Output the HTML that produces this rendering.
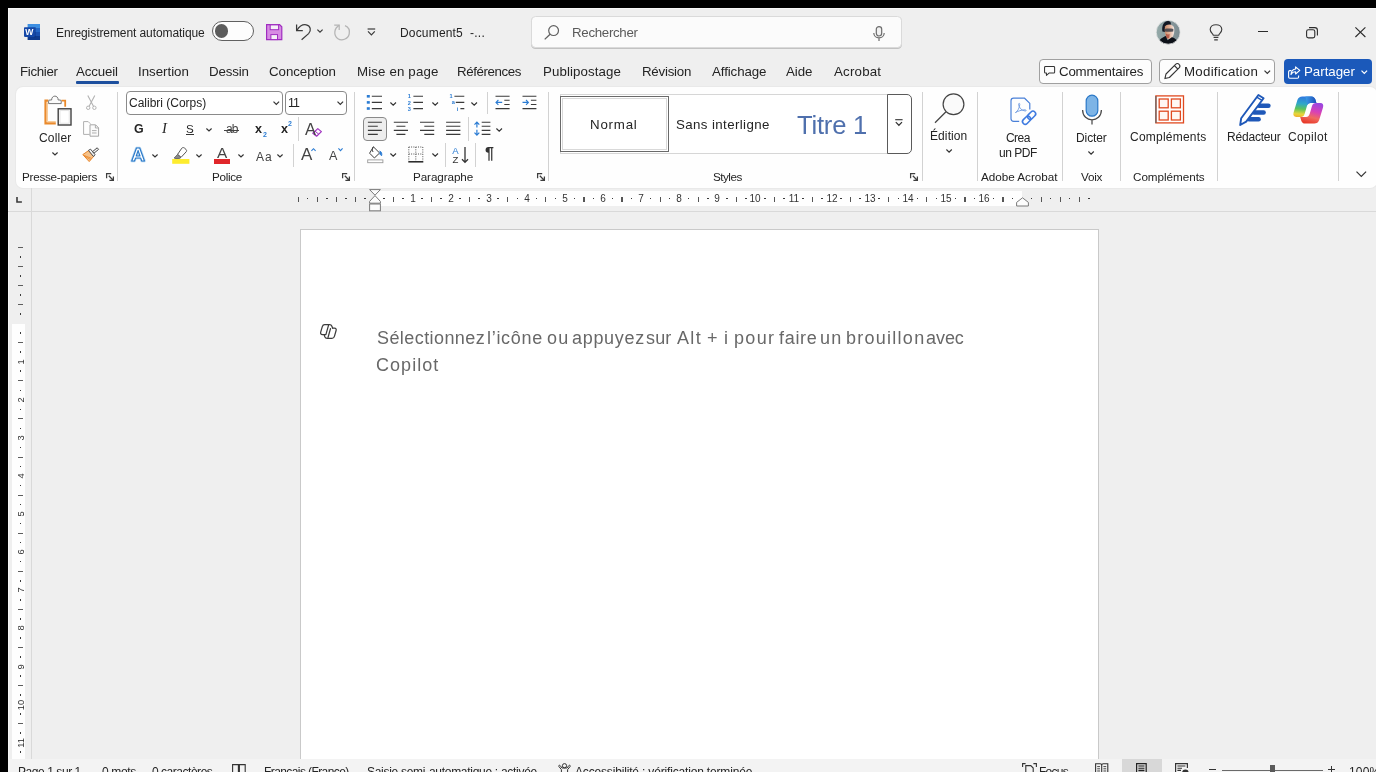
<!DOCTYPE html>
<html lang="fr">
<head>
<meta charset="utf-8">
<title>Document5 - Word</title>
<style>
html,body{margin:0;padding:0;}
body{width:1376px;height:772px;overflow:hidden;background:#000;position:relative;font-family:"Liberation Sans",sans-serif;}
#win{position:absolute;left:8px;top:8px;width:1368px;height:764px;background:#efefef;}
.a{position:absolute;}
.t{position:absolute;white-space:nowrap;line-height:20px;height:20px;will-change:transform;}
svg{position:absolute;overflow:visible;}
svg.g{will-change:transform;}
.sep{position:absolute;width:1px;background:#d2d2d2;}
.box{position:absolute;box-sizing:border-box;border:1.25px solid #8a8a8a;border-radius:4px;background:#fff;}
</style>
</head>
<body>
<div id="win"></div>
<div class="a" style="left:8px;top:8px;width:1368px;height:1px;background:#f8f8f8"></div>
<div class="a" style="left:8px;top:8px;width:1px;height:764px;background:#f8f8f8"></div>
<!-- ===== title bar ===== -->
<svg class="g" style="left:24px;top:24px" width="16" height="16" viewBox="0 0 16 16">
 <rect x="3.6" y="0" width="12.4" height="4" fill="#3d8fe2"/>
 <rect x="3.6" y="4" width="12.4" height="4" fill="#2467c6"/>
 <rect x="3.6" y="8" width="12.4" height="4" fill="#184fae"/>
 <rect x="3.6" y="12" width="12.4" height="4" fill="#0d3a8e"/>
 <rect x="9.8" y="3" width="2" height="10.6" fill="#0b2f78" opacity="0.45"/>
 <rect x="0" y="3.3" width="10.8" height="9.6" rx="0.8" fill="#1548a8"/>
 <text x="5.4" y="11.2" font-family="Liberation Sans, sans-serif" font-weight="bold" font-size="8.6" fill="#fff" text-anchor="middle">W</text>
</svg>
<div class="a" style="left:211.5px;top:21px;width:42.5px;height:20px;box-sizing:border-box;border:1.2px solid #606060;border-radius:10px;background:#fdfdfd"></div>
<div class="a" style="left:215px;top:24.3px;width:13.4px;height:13.4px;border-radius:50%;background:#5c5c5c"></div>
<!-- save -->
<svg style="left:266px;top:24px" width="16.4" height="16.2" viewBox="0 0 16.4 16.2">
 <path d="M0.6 0.6 H13.6 L15.8 2.8 V15.6 H0.6 Z" fill="#d78ce3" stroke="#a02dc0" stroke-width="1.2" stroke-linejoin="miter"/>
 <rect x="4.2" y="0.9" width="8.4" height="4.8" fill="#f6f0f8" stroke="#a02dc0" stroke-width="1"/>
 <rect x="4.9" y="10.6" width="6.6" height="5" fill="#f6f0f8" stroke="#a02dc0" stroke-width="1"/>
</svg>
<!-- undo -->
<svg style="left:295px;top:23px" width="18" height="18" viewBox="0 0 18 18">
 <path d="M1.6 1.4 V7.6 H7.8" fill="none" stroke="#3b3b3b" stroke-width="1.25"/>
 <path d="M1.9 7.3 C4.2 3.6 7.6 1.2 11.2 1.8 C15.6 2.6 16.6 7.6 13.6 10.6 L6.6 16.8" fill="none" stroke="#3b3b3b" stroke-width="1.25"/>
</svg>
<svg style="left:317px;top:29px" width="6" height="4" viewBox="0 0 6 4"><path d="M0.4 0.6 L3 3.2 L5.6 0.6" fill="none" stroke="#3b3b3b" stroke-width="1.2"/></svg>
<!-- redo -->
<svg style="left:333px;top:23px" width="18" height="18" viewBox="0 0 18 18">
 <path d="M1.2 2 H6.2 V7" fill="none" stroke="#b4b4b4" stroke-width="1.25"/>
 <path d="M6 2.4 C1 5.6 0.4 12 4.6 15.4 C8.8 18.4 15 16.2 16.2 11 C17 7.4 15.2 4 12 2.6" fill="none" stroke="#b4b4b4" stroke-width="1.25"/>
</svg>
<!-- customize QAT -->
<svg style="left:367px;top:28px" width="9" height="8" viewBox="0 0 9 8">
 <path d="M0.6 1 H8.2" stroke="#3b3b3b" stroke-width="1.2" fill="none"/>
 <path d="M1 3.4 L4.4 6.8 L7.8 3.4" stroke="#3b3b3b" stroke-width="1.2" fill="none"/>
</svg>
<!-- search box -->
<div class="a" style="left:531px;top:16.2px;width:370.6px;height:31.8px;box-sizing:border-box;border:1px solid #dadada;border-radius:4.5px;background:#fbfbfb;box-shadow:0 1px 0 #c2c2c2"></div>
<svg style="left:544px;top:25px" width="16" height="15" viewBox="0 0 16 15">
 <circle cx="9.6" cy="5.6" r="4.9" fill="none" stroke="#5f5f5f" stroke-width="1.2"/>
 <path d="M6.1 9.2 L0.7 14.4" stroke="#5f5f5f" stroke-width="1.3" fill="none"/>
</svg>
<svg style="left:873px;top:25.5px" width="12" height="16" viewBox="0 0 12 16">
 <rect x="3.3" y="0.6" width="5.4" height="9.4" rx="2.7" fill="#f1f1f1" stroke="#6c6c6c" stroke-width="1.2"/>
 <path d="M0.8 7 C0.8 13.4 11.2 13.4 11.2 7 M6 12 V15" fill="none" stroke="#6c6c6c" stroke-width="1.2"/>
</svg>
<!-- avatar -->
<svg style="left:1156.2px;top:19.6px" width="24.4" height="24.4" viewBox="0 0 24.4 24.4">
 <defs><clipPath id="av"><circle cx="12.2" cy="12.2" r="12"/></clipPath>
 <linearGradient id="avg" x1="0" y1="0" x2="1" y2="0"><stop offset="0" stop-color="#93a9a8"/><stop offset="0.5" stop-color="#8b9c9f"/><stop offset="1" stop-color="#7a8a90"/></linearGradient>
 <linearGradient id="avf" x1="0" y1="0" x2="1" y2="0"><stop offset="0" stop-color="#c88a68"/><stop offset="0.55" stop-color="#e6b8a0"/><stop offset="1" stop-color="#f1e9e6"/></linearGradient></defs>
 <g clip-path="url(#av)">
  <rect width="24.4" height="24.4" fill="url(#avg)"/>
  <path d="M6.4 11.4 C5.4 5 8.4 0.6 12.4 1 C14.6 1.2 15.4 3 14.6 5 L9.2 12 Z" fill="#121824"/>
  <path d="M9 6.6 C10 3.8 16.4 3.4 17.8 7 C19 10.4 18 15.6 15.6 18.4 C13.6 20.4 10.6 18.8 9.6 15.4 C8.8 12.6 8.4 9.2 9 6.6 Z" fill="url(#avf)"/>
  <path d="M8.8 9 C11 8.4 14.6 8.4 17.4 9 L17.2 11.4 C14.6 12 11 12 9 11.4 Z" fill="#3a3d48" opacity="0.85"/>
  <path d="M10 13.8 C11.4 14.8 12.8 14.8 13.6 13.8 L13.4 17.6 C12.4 18.8 11 18.6 10.2 17.4 Z" fill="#b04a3a" opacity="0.8"/>
  <path d="M1.6 25 C2.6 19 6.6 17.4 9.8 16 L11.6 20.2 L15.8 17.2 C19 17.8 21.6 20 22.4 25 Z" fill="#0c1018"/>
 </g>
 <circle cx="12.2" cy="12.2" r="12" fill="none" stroke="#e6e6e6" stroke-width="0.8"/>
</svg>
<!-- lightbulb -->
<svg style="left:1208.5px;top:24px" width="14" height="17" viewBox="0 0 14 17">
 <path d="M4.3 11.2 C4.1 9.6 1.2 8.6 1.2 5.6 C1.2 2.6 3.8 0.7 7 0.7 C10.2 0.7 12.8 2.6 12.8 5.6 C12.8 8.6 9.9 9.6 9.7 11.2 Z" fill="none" stroke="#3b3b3b" stroke-width="1.15"/>
 <path d="M4.6 13.4 H9.4 M5.2 15.8 H8.8" stroke="#3b3b3b" stroke-width="1.15" fill="none"/>
</svg>
<!-- window controls -->
<div class="a" style="left:1258.2px;top:31.2px;width:10.2px;height:1.1px;background:#2b2b2b"></div>
<svg style="left:1305.5px;top:26.5px" width="12" height="11.5" viewBox="0 0 12 11.5">
 <rect x="0.6" y="2.7" width="8.2" height="8.2" rx="1.8" fill="none" stroke="#2b2b2b" stroke-width="1.1"/>
 <path d="M3 0.6 H8.8 C10.3 0.6 11.4 1.7 11.4 3.2 V8.6" fill="none" stroke="#2b2b2b" stroke-width="1.1"/>
</svg>
<svg style="left:1354.5px;top:27.2px" width="10.8" height="10.4" viewBox="0 0 10.8 10.4">
 <path d="M0.4 0.4 L10.4 10 M10.4 0.4 L0.4 10" stroke="#2b2b2b" stroke-width="1.1" fill="none"/>
</svg>
<!-- ===== tab row ===== -->
<div class="a" style="left:75.5px;top:81.3px;width:43px;height:2.4px;background:#1d4f9e;border-radius:1px"></div>
<div class="box" style="left:1038.8px;top:59.2px;width:112.8px;height:24.8px;border:1.4px solid #a0a0a0;background:#fdfdfd"></div>
<svg style="left:1044px;top:66px" width="11.2" height="10.3" viewBox="0 0 12 11">
 <path d="M1.6 0.6 H10.4 C11 0.6 11.4 1 11.4 1.6 V6.6 C11.4 7.2 11 7.6 10.4 7.6 H5.4 L2.6 10 V7.6 H1.6 C1 7.6 0.6 7.2 0.6 6.6 V1.6 C0.6 1 1 0.6 1.6 0.6 Z" fill="none" stroke="#333" stroke-width="1.1" stroke-linejoin="round"/>
</svg>
<div class="box" style="left:1159.3px;top:59.2px;width:116px;height:24.8px;border:1.4px solid #a0a0a0;background:#fdfdfd"></div>
<svg style="left:1164.4px;top:63.2px" width="16.4" height="16.2" viewBox="0 0 16.4 16.2">
 <path d="M11.6 1.3 C12.6 0.3 14.2 0.3 15.1 1.3 C16.1 2.3 16.1 3.8 15.1 4.8 L5.4 14.5 L0.9 15.6 L2 11 Z" fill="none" stroke="#333" stroke-width="1.1" stroke-linejoin="round"/>
 <path d="M10.4 2.6 L13.8 6" stroke="#333" stroke-width="1.1" fill="none"/>
</svg>
<svg style="left:1264.4px;top:69.8px" width="6.6" height="4.4" viewBox="0 0 6.6 4.4"><path d="M0.5 0.6 L3.3 3.5 L6.1 0.6" fill="none" stroke="#333" stroke-width="1.2"/></svg>
<div class="a" style="left:1283.6px;top:59.3px;width:88.6px;height:24.6px;border-radius:4px;background:#1b59ba"></div>
<svg style="left:1288px;top:65.6px" width="12.4" height="12.8" viewBox="0 0 12.4 12.8">
 <path d="M3.4 4.6 H1.8 C1.1 4.6 0.6 5.1 0.6 5.8 V11 C0.6 11.7 1.1 12.2 1.8 12.2 H9.4 C10.1 12.2 10.6 11.7 10.6 11 V9.4" fill="none" stroke="#fff" stroke-width="1.1"/>
 <path d="M7.6 0.8 L11.8 4.4 L7.6 8 V5.8 C5.4 5.8 4 6.6 3 8.6 C3.2 5.2 4.8 3.2 7.6 3 Z" fill="none" stroke="#fff" stroke-width="1.1" stroke-linejoin="round"/>
</svg>
<svg style="left:1361.4px;top:69.8px" width="6.6" height="4.4" viewBox="0 0 6.6 4.4"><path d="M0.5 0.6 L3.3 3.5 L6.1 0.6" fill="none" stroke="#fff" stroke-width="1.2"/></svg>
<!-- ===== ribbon panel ===== -->
<div class="a" style="left:16px;top:87.3px;width:1361px;height:100.3px;background:#fefefe;border-radius:7px;box-shadow:0 0 0 1px #e9e9e9"></div>
<!-- ===== clipboard group ===== -->
<svg style="left:42px;top:94px" width="32" height="34" viewBox="0 0 32 34">
 <path d="M6.4 6.7 H3.5 V29.3 H13.8" fill="none" stroke="#ea8a2c" stroke-width="2.2"/>
 <path d="M5.4 8.4 V27.6 H13.8" fill="none" stroke="#f8c890" stroke-width="1"/>
 <path d="M19.4 6.7 H23.2 V12.8" fill="none" stroke="#ea8a2c" stroke-width="1.8"/>
 <path d="M6.6 9.6 V7.2 C6.6 6.4 7 6 7.8 6 H9.6 C9.6 0.8 16.2 0.8 16.2 6 H18 C18.8 6 19.2 6.4 19.2 7.2 V9.6 Z" fill="#fbfbfb" stroke="#777" stroke-width="1"/>
 <rect x="16.2" y="14.8" width="12.8" height="16.2" fill="#fff" stroke="#404040" stroke-width="1.4"/>
 <rect x="18" y="16.6" width="9.2" height="12.6" fill="none" stroke="#e2e2e2" stroke-width="0.9"/>
</svg>
<svg style="left:52.2px;top:152px" width="6" height="3.6" viewBox="0 0 6 3.6"><path d="M0.4 0.5 L3 3 L5.6 0.5" fill="none" stroke="#333" stroke-width="1.15"/></svg>
<!-- cut -->
<svg style="left:85.6px;top:95.4px" width="10.6" height="15.2" viewBox="0 0 10.6 15.2">
 <path d="M1.8 0.4 L7.6 11.4 M8.8 0.4 L3 11.4" stroke="#b2b2b2" stroke-width="1.1" fill="none"/>
 <circle cx="2.2" cy="12.8" r="1.7" fill="none" stroke="#b2b2b2" stroke-width="1"/>
 <circle cx="8.4" cy="12.8" r="1.7" fill="none" stroke="#b2b2b2" stroke-width="1"/>
</svg>
<!-- copy -->
<svg style="left:82.6px;top:120.8px" width="16.4" height="15.8" viewBox="0 0 16.4 15.8">
 <path d="M6.6 13.4 H0.6 V0.6 H5.2 L7.4 2.8" fill="none" stroke="#b0b0b0" stroke-width="1"/>
 <path d="M7 3.8 H12.6 L15.6 6.8 V15.2 H7 Z" fill="#fbfbfb" stroke="#a6a6a6" stroke-width="1"/>
 <path d="M12.4 4 V7 H15.4 M9 9.6 H13.6 M9 12 H13.6" fill="none" stroke="#a6a6a6" stroke-width="0.9"/>
</svg>
<!-- format painter -->
<svg style="left:82.4px;top:147px" width="17.4" height="15.4" viewBox="0 0 17.4 15.4">
 <path d="M0.8 7.6 L6.6 3.6 L11.6 9.4 L7.2 14.6 Z" fill="#f6c28a" stroke="#e8862a" stroke-width="1" stroke-linejoin="round"/>
 <path d="M3 9.4 L8.6 12.6 M2 8.4 L9.6 11.4" stroke="#e8862a" stroke-width="0.8" fill="none"/>
 <path d="M6.4 3.4 L8.6 2.2 L13 7.6 L11.6 9.6 Z" fill="#f4f4f4" stroke="#4a4a4a" stroke-width="1" stroke-linejoin="round"/>
 <path d="M10.6 4.6 L15.2 0.8 L16.6 2.4 L12 6.2 Z" fill="#f4f4f4" stroke="#4a4a4a" stroke-width="1" stroke-linejoin="round"/>
</svg>
<!-- launcher -->
<svg style="left:105.8px;top:173.2px" width="8" height="8" viewBox="0 0 8 8"><path d="M0.6 5.2 V0.6 H5.2 M2.8 2.8 L7.2 7.2 M7.4 3.4 V7.4 H3.4" fill="none" stroke="#3e3e3e" stroke-width="1.25"/></svg>
<div class="sep" style="left:117px;top:92px;height:89px"></div>
<!-- ===== font group ===== -->
<div class="box" style="left:126px;top:91px;width:156.8px;height:24px"></div>
<svg style="left:272.8px;top:101.4px" width="6.6" height="4.2" viewBox="0 0 6.6 4.2"><path d="M0.5 0.6 L3.3 3.4 L6.1 0.6" fill="none" stroke="#333" stroke-width="1.2"/></svg>
<div class="box" style="left:285.3px;top:91px;width:61.6px;height:24px"></div>
<svg style="left:336.6px;top:101.4px" width="6.6" height="4.2" viewBox="0 0 6.6 4.2"><path d="M0.5 0.6 L3.3 3.4 L6.1 0.6" fill="none" stroke="#333" stroke-width="1.2"/></svg>
<!-- underline for S, chevron -->
<div class="a" style="left:186.3px;top:134.3px;width:8px;height:1px;background:#333"></div>
<svg style="left:206px;top:128px" width="6" height="3.6" viewBox="0 0 6 3.6"><path d="M0.4 0.5 L3 3 L5.6 0.5" fill="none" stroke="#333" stroke-width="1.15"/></svg>
<!-- strike for ab -->
<div class="a" style="left:223.8px;top:129.7px;width:15.6px;height:1px;background:#444"></div>
<div class="sep" style="left:298.2px;top:117.4px;height:23.2px"></div>
<!-- eraser -->
<svg style="left:311.6px;top:127.8px" width="10" height="9" viewBox="0 0 10 9">
 <path d="M5.8 0.6 L9.4 3.6 L4.6 8.2 L0.8 5.2 Z" fill="#fdf6ff" stroke="#a136c0" stroke-width="1.2" stroke-linejoin="round"/>
 <path d="M3 3.2 L6.8 6.2" stroke="#a136c0" stroke-width="1" fill="none"/>
</svg>
<!-- text effects A -->
<svg class="g" style="left:129px;top:145px" width="19" height="19" viewBox="0 0 19 19">
 <text x="9.2" y="16.2" text-anchor="middle" font-family="Liberation Sans, sans-serif" font-weight="bold" font-size="19" fill="#d8e9f8" stroke="#b9d7f2" stroke-width="2.6" stroke-linejoin="round">A</text>
 <text x="9.2" y="16.2" text-anchor="middle" font-family="Liberation Sans, sans-serif" font-weight="bold" font-size="19" fill="#fff" stroke="#2878c8" stroke-width="1.1" stroke-linejoin="round">A</text>
</svg>
<svg style="left:151.8px;top:153.6px" width="6" height="3.6" viewBox="0 0 6 3.6"><path d="M0.4 0.5 L3 3 L5.6 0.5" fill="none" stroke="#333" stroke-width="1.15"/></svg>
<!-- highlighter -->
<svg style="left:172.4px;top:146.8px" width="17.6" height="17" viewBox="0 0 17.6 17">
 <path d="M9.8 1.2 C10.6 0.4 11.6 0.4 12.4 1 L14 2.4 C14.8 3.2 14.8 4 14.2 4.8 L9 10.4 L5.6 7.4 Z" fill="none" stroke="#555" stroke-width="1"/>
 <path d="M5.6 7.4 L9 10.4 L7.6 11.4 L3 11.6 L2.2 11 Z" fill="#8a8a8a" stroke="#555" stroke-width="0.8" stroke-linejoin="round"/>
 <rect x="0.2" y="12" width="17.2" height="4.8" fill="#fdec2e"/>
</svg>
<svg style="left:196px;top:153.6px" width="6" height="3.6" viewBox="0 0 6 3.6"><path d="M0.4 0.5 L3 3 L5.6 0.5" fill="none" stroke="#333" stroke-width="1.15"/></svg>
<!-- font color bar -->
<div class="a" style="left:213.8px;top:159.2px;width:16px;height:4.5px;background:#e0262a"></div>
<svg style="left:237.6px;top:153.6px" width="6" height="3.6" viewBox="0 0 6 3.6"><path d="M0.4 0.5 L3 3 L5.6 0.5" fill="none" stroke="#333" stroke-width="1.15"/></svg>
<svg style="left:276.8px;top:153.6px" width="6" height="3.6" viewBox="0 0 6 3.6"><path d="M0.4 0.5 L3 3 L5.6 0.5" fill="none" stroke="#333" stroke-width="1.15"/></svg>
<div class="sep" style="left:293.2px;top:143.8px;height:22.8px"></div>
<svg style="left:311.4px;top:148px" width="5" height="3.4" viewBox="0 0 5 3.4"><path d="M0.4 3 L2.5 0.7 L4.6 3" fill="none" stroke="#2b7cd3" stroke-width="1.1"/></svg>
<svg style="left:337.8px;top:148.2px" width="5" height="3.4" viewBox="0 0 5 3.4"><path d="M0.4 0.4 L2.5 2.7 L4.6 0.4" fill="none" stroke="#2b7cd3" stroke-width="1.1"/></svg>
<svg style="left:342.4px;top:173.2px" width="8" height="8" viewBox="0 0 8 8"><path d="M0.6 5.2 V0.6 H5.2 M2.8 2.8 L7.2 7.2 M7.4 3.4 V7.4 H3.4" fill="none" stroke="#3e3e3e" stroke-width="1.25"/></svg>
<div class="sep" style="left:354px;top:92px;height:89px"></div>
<!-- ===== paragraph group ===== -->
<svg style="left:366px;top:94px" width="18" height="17" viewBox="0 0 18 17">
 <g fill="#2b7cd3"><rect x="0.8" y="1" width="3" height="2.6"/><rect x="0.8" y="7.1" width="3" height="2.6"/><rect x="0.8" y="13.2" width="3" height="2.6"/></g>
 <path d="M5.8 2.2 H16 M5.8 8.4 H16 M5.8 14.6 H16" stroke="#3a3a3a" stroke-width="1.1" fill="none"/>
</svg>
<svg style="left:390.4px;top:101.6px" width="6.4" height="3.8" viewBox="0 0 6.4 3.8"><path d="M0.4 0.5 L3.2 3.2 L6 0.5" fill="none" stroke="#333" stroke-width="1.15"/></svg>
<svg class="g" style="left:407px;top:94px" width="18" height="17" viewBox="0 0 18 17">
 <g font-family="Liberation Sans, sans-serif" font-size="5.6" font-weight="bold" fill="#2b7cd3"><text x="0.8" y="4.3">1</text><text x="0.8" y="10.5">2</text><text x="0.8" y="16.7">3</text></g>
 <path d="M6.4 2.2 H16 M6.4 8.4 H16 M6.4 14.6 H16" stroke="#3a3a3a" stroke-width="1.1" fill="none"/>
</svg>
<svg style="left:431.6px;top:101.6px" width="6.4" height="3.8" viewBox="0 0 6.4 3.8"><path d="M0.4 0.5 L3.2 3.2 L6 0.5" fill="none" stroke="#333" stroke-width="1.15"/></svg>
<svg class="g" style="left:448px;top:94px" width="18" height="17" viewBox="0 0 18 17">
 <g font-family="Liberation Sans, sans-serif" font-size="5.6" font-weight="bold" fill="#2b7cd3"><text x="1.4" y="4.3">1</text><text x="3.8" y="10.4">a</text><text x="8.8" y="16.7">i</text></g>
 <path d="M6.4 2.2 H16.3 M7.8 8.4 H16.3 M12.4 14.6 H16.3" stroke="#3a3a3a" stroke-width="1.1" fill="none"/>
</svg>
<svg style="left:470.8px;top:101.6px" width="6.4" height="3.8" viewBox="0 0 6.4 3.8"><path d="M0.4 0.5 L3.2 3.2 L6 0.5" fill="none" stroke="#333" stroke-width="1.15"/></svg>
<div class="sep" style="left:487.4px;top:91.5px;height:22.5px"></div>
<svg style="left:495px;top:94px" width="16" height="17" viewBox="0 0 16 17">
 <path d="M0.5 2.2 H14.6 M0.5 14.6 H14.6 M9.3 6.3 H14.6 M9.3 10.5 H14.6" stroke="#3a3a3a" stroke-width="1.1" fill="none"/>
 <path d="M7.2 8.4 H1 M3.4 6 L1 8.4 L3.4 10.8" stroke="#2b7cd3" stroke-width="1.1" fill="none"/>
</svg>
<svg style="left:521.5px;top:94px" width="16" height="17" viewBox="0 0 16 17">
 <path d="M0.5 2.2 H14.4 M0.5 14.6 H14.4 M8.9 6.3 H14.4 M8.9 10.5 H14.4" stroke="#3a3a3a" stroke-width="1.1" fill="none"/>
 <path d="M0.5 8.4 H6.4 M4 6 L6.4 8.4 L4 10.8" stroke="#2b7cd3" stroke-width="1.1" fill="none"/>
</svg>
<!-- row 2 -->
<div class="box" style="left:362.8px;top:117px;width:24px;height:23.6px;background:#ededed;border-color:#8a8a8a"></div>
<svg style="left:367px;top:120px" width="16" height="16" viewBox="0 0 16 16"><path d="M0.9 2.3 H14.9 M0.9 6.3 H10.8 M0.9 10.4 H14.9 M0.9 14.4 H10.8" stroke="#3a3a3a" stroke-width="1.1" fill="none"/></svg>
<svg style="left:393px;top:120px" width="16" height="16" viewBox="0 0 16 16"><path d="M0.8 2.3 H15 M3.4 6.3 H12.4 M0.8 10.4 H15 M3.4 14.4 H12.4" stroke="#3a3a3a" stroke-width="1.1" fill="none"/></svg>
<svg style="left:419px;top:120px" width="16" height="16" viewBox="0 0 16 16"><path d="M1 2.3 H15.2 M5.3 6.3 H15.2 M1 10.4 H15.2 M5.3 14.4 H15.2" stroke="#3a3a3a" stroke-width="1.1" fill="none"/></svg>
<svg style="left:445px;top:120px" width="16" height="16" viewBox="0 0 16 16"><path d="M1.1 2.3 H15.4 M1.1 6.3 H15.4 M1.1 10.4 H15.4 M1.1 14.4 H15.4" stroke="#3a3a3a" stroke-width="1.1" fill="none"/></svg>
<div class="sep" style="left:467.5px;top:117.4px;height:23.2px"></div>
<svg style="left:473px;top:120px" width="19" height="17" viewBox="0 0 19 17">
 <path d="M8.7 2.3 H17.4 M8.7 6.3 H17.4 M8.7 10.4 H17.4 M8.7 14.4 H17.4" stroke="#3a3a3a" stroke-width="1.1" fill="none"/>
 <path d="M3.9 2 V7.4 M3.9 9.8 V15 M1.5 4.6 L3.9 2.1 L6.3 4.6 M1.5 12.6 L3.9 15.1 L6.3 12.6" stroke="#2b7cd3" stroke-width="1.2" fill="none"/>
</svg>
<svg style="left:496px;top:127.8px" width="6.4" height="3.8" viewBox="0 0 6.4 3.8"><path d="M0.4 0.5 L3.2 3.2 L6 0.5" fill="none" stroke="#333" stroke-width="1.15"/></svg>
<!-- row 3 -->
<svg style="left:366.6px;top:146px" width="17" height="17.4" viewBox="0 0 17 17.4">
 <path d="M6.4 0.8 L12.6 7 L7.4 12 L2.6 7.2 Z" fill="#fff" stroke="#3a3a3a" stroke-width="1" stroke-linejoin="round"/>
 <path d="M6.4 0.8 C5.2 2.2 5.2 4.6 6 6" fill="none" stroke="#3a3a3a" stroke-width="1"/>
 <path d="M12.6 5 C14.6 5.6 15.2 7.6 14.6 9.8 C14 8.8 13.4 8.4 12.6 8.2" fill="#2b7cd3" stroke="#2b7cd3" stroke-width="0.9"/>
 <rect x="0.7" y="13.9" width="15.2" height="2.8" fill="#fff" stroke="#9a9a9a" stroke-width="0.9"/>
</svg>
<svg style="left:390.4px;top:153.4px" width="6.4" height="3.8" viewBox="0 0 6.4 3.8"><path d="M0.4 0.5 L3.2 3.2 L6 0.5" fill="none" stroke="#333" stroke-width="1.15"/></svg>
<svg style="left:408px;top:146px" width="16" height="17" viewBox="0 0 16 17">
 <path d="M0.8 1 H14.8 M0.8 1 V15 M14.8 1 V15 M7.8 1 V15 M0.8 8 H14.8" stroke="#555" stroke-width="1" stroke-dasharray="1 1.3" fill="none"/>
 <path d="M0.3 15.8 H15.3" stroke="#222" stroke-width="1.5" fill="none"/>
</svg>
<svg style="left:431.6px;top:153.4px" width="6.4" height="3.8" viewBox="0 0 6.4 3.8"><path d="M0.4 0.5 L3.2 3.2 L6 0.5" fill="none" stroke="#333" stroke-width="1.15"/></svg>
<div class="sep" style="left:445.4px;top:143px;height:24px"></div>
<svg class="g" style="left:451px;top:146px" width="19" height="18" viewBox="0 0 19 18">
 <text x="1.2" y="8" font-family="Liberation Sans, sans-serif" font-size="9.6" fill="#2b7cd3">A</text>
 <text x="1.5" y="16.6" font-family="Liberation Sans, sans-serif" font-size="9.6" fill="#333">Z</text>
 <path d="M14 1 V16.2 M11 13.2 L14 16.4 L17 13.2" stroke="#333" stroke-width="1.3" fill="none"/>
</svg>
<div class="sep" style="left:474.8px;top:143px;height:24px"></div>
<svg style="left:536.8px;top:173.2px" width="8" height="8" viewBox="0 0 8 8"><path d="M0.6 5.2 V0.6 H5.2 M2.8 2.8 L7.2 7.2 M7.4 3.4 V7.4 H3.4" fill="none" stroke="#3e3e3e" stroke-width="1.25"/></svg>
<div class="sep" style="left:548.2px;top:92px;height:89px"></div>
<!-- ===== styles gallery ===== -->
<div class="a" style="left:559.5px;top:94.2px;width:328px;height:59.4px;box-sizing:border-box;border:1px solid #d6d6d6;background:#fff"></div>
<div class="a" style="left:560px;top:95.6px;width:109px;height:56.6px;box-sizing:border-box;border:1.2px solid #6a6a6a;background:#fff"></div>
<div class="a" style="left:562.2px;top:97.8px;width:104.6px;height:52.2px;box-sizing:border-box;border:1px solid #d9d9d9"></div>
<div class="a" style="left:887.2px;top:94px;width:24.6px;height:59.8px;box-sizing:border-box;border:1.2px solid #5a5a5a;border-radius:0 5px 5px 0;background:#fff"></div>
<svg style="left:895.4px;top:119px" width="8" height="7.4" viewBox="0 0 8 7.4">
 <path d="M0.2 0.7 H7.6" stroke="#333" stroke-width="1.1" fill="none"/>
 <path d="M0.8 3.2 L3.9 6.3 L7 3.2" stroke="#333" stroke-width="1.2" fill="none"/>
</svg>
<svg style="left:910.2px;top:173.2px" width="8" height="8" viewBox="0 0 8 8"><path d="M0.6 5.2 V0.6 H5.2 M2.8 2.8 L7.2 7.2 M7.4 3.4 V7.4 H3.4" fill="none" stroke="#3e3e3e" stroke-width="1.25"/></svg>
<div class="sep" style="left:922.2px;top:92px;height:89px"></div>
<!-- ===== edition ===== -->
<svg style="left:934px;top:93px" width="31" height="31" viewBox="0 0 31 31">
 <circle cx="19.5" cy="11.3" r="10.4" fill="#fafafa" stroke="#444" stroke-width="1.2"/>
 <path d="M12 18.8 L1 29.8" stroke="#444" stroke-width="1.3" fill="none"/>
</svg>
<svg style="left:946.2px;top:148.8px" width="6.2" height="3.8" viewBox="0 0 6.2 3.8"><path d="M0.4 0.5 L3.1 3.1 L5.8 0.5" fill="none" stroke="#333" stroke-width="1.15"/></svg>
<div class="sep" style="left:977px;top:92px;height:89px"></div>
<!-- ===== adobe ===== -->
<svg style="left:1009.6px;top:97px" width="27.4" height="29" viewBox="0 0 27.4 29">
 <path d="M9.2 24.4 H3.6 C2 24.4 1 23.4 1 21.8 V3.8 C1 2.2 2 1.2 3.6 1.2 H14.6 L19.8 6.4 V12.4" fill="none" stroke="#4a80d8" stroke-width="1.2" stroke-linejoin="round"/>
 <path d="M5.4 15.6 C7.6 14.6 9.6 10.6 9.8 7.4 C9.9 6 8.5 6 8.6 7.4 C8.8 10.4 11.6 13.8 15.2 14 C16.6 14 16.4 12.8 15 12.8 C11.4 12.8 7.4 14.4 5.4 15.6 Z" fill="none" stroke="#6f9be0" stroke-width="0.9" stroke-linejoin="round"/>
 <g fill="none" stroke="#3f7be0" stroke-width="1.6">
  <rect x="-4.6" y="-2.7" width="9.2" height="5.4" rx="2.7" transform="translate(21.6 18.2) rotate(-45)"/>
  <rect x="-4.6" y="-2.7" width="9.2" height="5.4" rx="2.7" transform="translate(16.6 23.2) rotate(-45)"/>
 </g>
</svg>
<div class="sep" style="left:1062.2px;top:92px;height:89px"></div>
<!-- ===== dicter ===== -->
<svg style="left:1081px;top:94px" width="22" height="31" viewBox="0 0 22 31">
 <rect x="5.2" y="1.2" width="11.6" height="21" rx="5.8" fill="#7db4e6" stroke="#2a78c8" stroke-width="1.2"/>
 <path d="M1.6 16 C1.6 29 20.4 29 20.4 16 M11 25.8 V30.4" fill="none" stroke="#484848" stroke-width="1.25"/>
</svg>
<svg style="left:1088.2px;top:151.4px" width="6.2" height="3.8" viewBox="0 0 6.2 3.8"><path d="M0.4 0.5 L3.1 3.1 L5.8 0.5" fill="none" stroke="#333" stroke-width="1.15"/></svg>
<div class="sep" style="left:1120.4px;top:92px;height:89px"></div>
<!-- ===== complements ===== -->
<svg style="left:1155px;top:95.4px" width="29.4" height="28.8" viewBox="0 0 29.4 28.8">
 <rect x="0.9" y="0.9" width="27.6" height="27" fill="#fff" stroke="#e04a20" stroke-width="1.3"/>
 <path d="M0.9 0.9 V27.9" stroke="#6a6a6a" stroke-width="1.3" fill="none"/>
 <g fill="#fff7f3" stroke="#e04a20" stroke-width="1.3">
  <rect x="4.2" y="4" width="9" height="8.8"/><rect x="16.4" y="4" width="9" height="8.8"/>
  <rect x="4.2" y="16.2" width="9" height="8.8"/><rect x="16.4" y="16.2" width="9" height="8.8"/>
 </g>
</svg>
<div class="sep" style="left:1217.2px;top:92px;height:89px"></div>
<!-- ===== redacteur ===== -->
<svg style="left:1239px;top:93.6px" width="32" height="32" viewBox="0 0 32 32">
 <g stroke="#1f58b8" stroke-width="4.5" stroke-linecap="round" fill="none">
  <path d="M20 11.8 H29.4"/><path d="M15 18.5 H24.6"/><path d="M10 25.2 H19.6"/>
 </g>
 <path d="M19.4 1 L24.6 4.2 L7.2 27.6 L1.2 31 L2.2 24.2 Z" fill="#fff" stroke="#1f58b8" stroke-width="1.9" stroke-linejoin="round"/>
 <path d="M17.8 3.2 L23 6.4" stroke="#1f58b8" stroke-width="1.5" fill="none"/>
</svg>
<!-- ===== copilot ===== -->
<svg style="left:1293.4px;top:95.6px" width="30.6" height="28" viewBox="0 0 30.6 28">
 <defs>
  <linearGradient id="cpl" x1="0.3" y1="0" x2="0.2" y2="1"><stop offset="0" stop-color="#2f78e0"/><stop offset="0.35" stop-color="#2fa8c8"/><stop offset="0.6" stop-color="#5cc45a"/><stop offset="0.85" stop-color="#e8d63a"/><stop offset="1" stop-color="#f0b030"/></linearGradient>
  <linearGradient id="cpr" x1="0.7" y1="0" x2="0.4" y2="1"><stop offset="0" stop-color="#9a48e0"/><stop offset="0.4" stop-color="#d840b8"/><stop offset="0.7" stop-color="#f06a60"/><stop offset="1" stop-color="#e83a2a"/></linearGradient>
  <linearGradient id="cpt" x1="0" y1="0" x2="1" y2="0"><stop offset="0" stop-color="#3a9be8"/><stop offset="1" stop-color="#1c4fb8"/></linearGradient>
 </defs>
 <path d="M9.4 0.4 H18.4 C20.6 0.4 21.8 1.8 22.4 3.6 L23.4 7 H17.6 C15.4 7 14.4 8.4 13.8 10.4 L11.6 18 C11 20 9.8 21 7.6 21 H3.2 C0.8 21 -0.2 19 0.6 16.6 L4.4 4 C5.2 1.6 6.8 0.4 9.4 0.4 Z" fill="url(#cpl)"/>
 <path d="M12.4 0.4 H18.4 C20.6 0.4 21.8 1.8 22.4 3.6 L23.4 7 H17.6 C16 7 15 7.8 14.4 9 Z" fill="url(#cpt)"/>
 <path d="M21.2 27.6 H12.2 C10 27.6 8.8 26.2 8.2 24.4 L7.2 21 H13 C15.2 21 16.2 19.6 16.8 17.6 L19 10 C19.6 8 20.8 7 23 7 H27.4 C29.8 7 30.8 9 30 11.4 L26.2 24 C25.4 26.4 23.8 27.6 21.2 27.6 Z" fill="url(#cpr)"/>
</svg>
<div class="sep" style="left:1338px;top:92px;height:89px"></div>
<svg style="left:1356px;top:170.6px" width="10.6" height="6.4" viewBox="0 0 10.6 6.4"><path d="M0.5 0.6 L5.3 5.4 L10.1 0.6" fill="none" stroke="#333" stroke-width="1.2"/></svg>
<!-- ===== rulers ===== -->
<div class="a" style="left:374.5px;top:191px;width:647.5px;height:15px;background:#fefefe"></div>
<div class="a" style="left:8px;top:211px;width:1368px;height:1px;background:#d9d9d9"></div>
<div class="a" style="left:31px;top:188px;width:1px;height:571px;background:#d9d9d9"></div>
<div class="a" style="left:297.6px;top:196.6px;width:1.2px;height:5.2px;background:#555"></div>
<div class="a" style="left:316.6px;top:196.6px;width:1.2px;height:5.2px;background:#555"></div>
<div class="a" style="left:335.7px;top:196.6px;width:1.2px;height:5.2px;background:#555"></div>
<div class="a" style="left:354.7px;top:196.6px;width:1.2px;height:5.2px;background:#555"></div>
<div class="a" style="left:392.8px;top:196.6px;width:1.2px;height:5.2px;background:#555"></div>
<div class="a" style="left:430.9px;top:196.6px;width:1.2px;height:5.2px;background:#555"></div>
<div class="a" style="left:469.0px;top:196.6px;width:1.2px;height:5.2px;background:#555"></div>
<div class="a" style="left:507.1px;top:196.6px;width:1.2px;height:5.2px;background:#555"></div>
<div class="a" style="left:545.2px;top:196.6px;width:1.2px;height:5.2px;background:#555"></div>
<div class="a" style="left:583.4px;top:196.6px;width:1.2px;height:5.2px;background:#555"></div>
<div class="a" style="left:621.4px;top:196.6px;width:1.2px;height:5.2px;background:#555"></div>
<div class="a" style="left:659.5px;top:196.6px;width:1.2px;height:5.2px;background:#555"></div>
<div class="a" style="left:697.6px;top:196.6px;width:1.2px;height:5.2px;background:#555"></div>
<div class="a" style="left:735.7px;top:196.6px;width:1.2px;height:5.2px;background:#555"></div>
<div class="a" style="left:773.9px;top:196.6px;width:1.2px;height:5.2px;background:#555"></div>
<div class="a" style="left:811.9px;top:196.6px;width:1.2px;height:5.2px;background:#555"></div>
<div class="a" style="left:850.0px;top:196.6px;width:1.2px;height:5.2px;background:#555"></div>
<div class="a" style="left:888.1px;top:196.6px;width:1.2px;height:5.2px;background:#555"></div>
<div class="a" style="left:926.2px;top:196.6px;width:1.2px;height:5.2px;background:#555"></div>
<div class="a" style="left:964.4px;top:196.6px;width:1.2px;height:5.2px;background:#555"></div>
<div class="a" style="left:1002.4px;top:196.6px;width:1.2px;height:5.2px;background:#555"></div>
<div class="a" style="left:1040.6px;top:196.6px;width:1.2px;height:5.2px;background:#555"></div>
<div class="a" style="left:1059.6px;top:196.6px;width:1.2px;height:5.2px;background:#555"></div>
<div class="a" style="left:1078.7px;top:196.6px;width:1.2px;height:5.2px;background:#555"></div>
<div class="a" style="left:306.9px;top:197.9px;width:1.6px;height:1.6px;background:#3a3a3a"></div>
<div class="a" style="left:326.0px;top:197.9px;width:1.6px;height:1.6px;background:#3a3a3a"></div>
<div class="a" style="left:345.0px;top:197.9px;width:1.6px;height:1.6px;background:#3a3a3a"></div>
<div class="a" style="left:364.1px;top:197.9px;width:1.6px;height:1.6px;background:#3a3a3a"></div>
<div class="a" style="left:383.1px;top:197.9px;width:1.6px;height:1.6px;background:#3a3a3a"></div>
<div class="a" style="left:402.2px;top:197.9px;width:1.6px;height:1.6px;background:#3a3a3a"></div>
<div class="a" style="left:421.2px;top:197.9px;width:1.6px;height:1.6px;background:#3a3a3a"></div>
<div class="a" style="left:440.3px;top:197.9px;width:1.6px;height:1.6px;background:#3a3a3a"></div>
<div class="a" style="left:459.3px;top:197.9px;width:1.6px;height:1.6px;background:#3a3a3a"></div>
<div class="a" style="left:478.4px;top:197.9px;width:1.6px;height:1.6px;background:#3a3a3a"></div>
<div class="a" style="left:497.4px;top:197.9px;width:1.6px;height:1.6px;background:#3a3a3a"></div>
<div class="a" style="left:516.5px;top:197.9px;width:1.6px;height:1.6px;background:#3a3a3a"></div>
<div class="a" style="left:535.5px;top:197.9px;width:1.6px;height:1.6px;background:#3a3a3a"></div>
<div class="a" style="left:554.6px;top:197.9px;width:1.6px;height:1.6px;background:#3a3a3a"></div>
<div class="a" style="left:573.6px;top:197.9px;width:1.6px;height:1.6px;background:#3a3a3a"></div>
<div class="a" style="left:592.7px;top:197.9px;width:1.6px;height:1.6px;background:#3a3a3a"></div>
<div class="a" style="left:611.7px;top:197.9px;width:1.6px;height:1.6px;background:#3a3a3a"></div>
<div class="a" style="left:630.8px;top:197.9px;width:1.6px;height:1.6px;background:#3a3a3a"></div>
<div class="a" style="left:649.8px;top:197.9px;width:1.6px;height:1.6px;background:#3a3a3a"></div>
<div class="a" style="left:668.9px;top:197.9px;width:1.6px;height:1.6px;background:#3a3a3a"></div>
<div class="a" style="left:687.9px;top:197.9px;width:1.6px;height:1.6px;background:#3a3a3a"></div>
<div class="a" style="left:707.0px;top:197.9px;width:1.6px;height:1.6px;background:#3a3a3a"></div>
<div class="a" style="left:726.0px;top:197.9px;width:1.6px;height:1.6px;background:#3a3a3a"></div>
<div class="a" style="left:745.1px;top:197.9px;width:1.6px;height:1.6px;background:#3a3a3a"></div>
<div class="a" style="left:764.1px;top:197.9px;width:1.6px;height:1.6px;background:#3a3a3a"></div>
<div class="a" style="left:783.2px;top:197.9px;width:1.6px;height:1.6px;background:#3a3a3a"></div>
<div class="a" style="left:802.2px;top:197.9px;width:1.6px;height:1.6px;background:#3a3a3a"></div>
<div class="a" style="left:821.3px;top:197.9px;width:1.6px;height:1.6px;background:#3a3a3a"></div>
<div class="a" style="left:840.3px;top:197.9px;width:1.6px;height:1.6px;background:#3a3a3a"></div>
<div class="a" style="left:859.4px;top:197.9px;width:1.6px;height:1.6px;background:#3a3a3a"></div>
<div class="a" style="left:878.4px;top:197.9px;width:1.6px;height:1.6px;background:#3a3a3a"></div>
<div class="a" style="left:897.5px;top:197.9px;width:1.6px;height:1.6px;background:#3a3a3a"></div>
<div class="a" style="left:916.5px;top:197.9px;width:1.6px;height:1.6px;background:#3a3a3a"></div>
<div class="a" style="left:935.6px;top:197.9px;width:1.6px;height:1.6px;background:#3a3a3a"></div>
<div class="a" style="left:954.6px;top:197.9px;width:1.6px;height:1.6px;background:#3a3a3a"></div>
<div class="a" style="left:973.7px;top:197.9px;width:1.6px;height:1.6px;background:#3a3a3a"></div>
<div class="a" style="left:992.7px;top:197.9px;width:1.6px;height:1.6px;background:#3a3a3a"></div>
<div class="a" style="left:1011.8px;top:197.9px;width:1.6px;height:1.6px;background:#3a3a3a"></div>
<div class="a" style="left:1030.8px;top:197.9px;width:1.6px;height:1.6px;background:#3a3a3a"></div>
<div class="a" style="left:1049.9px;top:197.9px;width:1.6px;height:1.6px;background:#3a3a3a"></div>
<div class="a" style="left:1068.9px;top:197.9px;width:1.6px;height:1.6px;background:#3a3a3a"></div>
<div class="a" style="left:1088.0px;top:197.9px;width:1.6px;height:1.6px;background:#3a3a3a"></div>
<span class="t" style="left:402.5px;top:188.9px;width:20px;text-align:center;font-size:10px;color:#333">1</span>
<span class="t" style="left:440.6px;top:188.9px;width:20px;text-align:center;font-size:10px;color:#333">2</span>
<span class="t" style="left:478.7px;top:188.9px;width:20px;text-align:center;font-size:10px;color:#333">3</span>
<span class="t" style="left:516.8px;top:188.9px;width:20px;text-align:center;font-size:10px;color:#333">4</span>
<span class="t" style="left:554.9px;top:188.9px;width:20px;text-align:center;font-size:10px;color:#333">5</span>
<span class="t" style="left:593.0px;top:188.9px;width:20px;text-align:center;font-size:10px;color:#333">6</span>
<span class="t" style="left:631.1px;top:188.9px;width:20px;text-align:center;font-size:10px;color:#333">7</span>
<span class="t" style="left:669.2px;top:188.9px;width:20px;text-align:center;font-size:10px;color:#333">8</span>
<span class="t" style="left:707.3px;top:188.9px;width:20px;text-align:center;font-size:10px;color:#333">9</span>
<span class="t" style="left:745.4px;top:188.9px;width:20px;text-align:center;font-size:10px;color:#333">10</span>
<span class="t" style="left:783.5px;top:188.9px;width:20px;text-align:center;font-size:10px;color:#333">11</span>
<span class="t" style="left:821.6px;top:188.9px;width:20px;text-align:center;font-size:10px;color:#333">12</span>
<span class="t" style="left:859.7px;top:188.9px;width:20px;text-align:center;font-size:10px;color:#333">13</span>
<span class="t" style="left:897.8px;top:188.9px;width:20px;text-align:center;font-size:10px;color:#333">14</span>
<span class="t" style="left:935.9px;top:188.9px;width:20px;text-align:center;font-size:10px;color:#333">15</span>
<span class="t" style="left:974.0px;top:188.9px;width:20px;text-align:center;font-size:10px;color:#333">16</span>
<svg style="left:368.5px;top:189px" width="12" height="23" viewBox="0 0 12 23">
 <path d="M0.6 0.6 H11.4 L6 6.2 Z" fill="#fdfdfd" stroke="#7a7a7a" stroke-width="1" stroke-linejoin="round"/>
 <path d="M6 6.6 L11.4 12.4 V14.2 H0.6 V12.4 Z" fill="#fdfdfd" stroke="#7a7a7a" stroke-width="1" stroke-linejoin="round"/>
 <rect x="0.6" y="15" width="10.8" height="6.8" fill="#fdfdfd" stroke="#7a7a7a" stroke-width="1"/>
</svg>
<svg style="left:1016px;top:197px" width="13" height="10" viewBox="0 0 13 10">
 <path d="M6.5 0.8 L12.4 5.4 V9 H0.6 V5.4 Z" fill="#fdfdfd" stroke="#7a7a7a" stroke-width="1" stroke-linejoin="round"/>
</svg>
<svg style="left:16px;top:196.6px" width="7" height="6" viewBox="0 0 7 6"><path d="M1 0 V5 H5.9" fill="none" stroke="#3a3a3a" stroke-width="1.6"/></svg>
<div class="a" style="left:12px;top:324px;width:13px;height:435px;background:#fefefe"></div>
<div class="a" style="left:18px;top:246.9px;width:5px;height:1px;background:#5e5e5e"></div>
<div class="a" style="left:19.7px;top:256.1px;width:1.6px;height:1.6px;background:#3a3a3a"></div>
<div class="a" style="left:18px;top:266.0px;width:5px;height:1px;background:#5e5e5e"></div>
<div class="a" style="left:19.7px;top:275.2px;width:1.6px;height:1.6px;background:#3a3a3a"></div>
<div class="a" style="left:18px;top:285.0px;width:5px;height:1px;background:#5e5e5e"></div>
<div class="a" style="left:19.7px;top:294.2px;width:1.6px;height:1.6px;background:#3a3a3a"></div>
<div class="a" style="left:18px;top:304.1px;width:5px;height:1px;background:#5e5e5e"></div>
<div class="a" style="left:19.7px;top:313.3px;width:1.6px;height:1.6px;background:#3a3a3a"></div>
<div class="a" style="left:19.7px;top:332.3px;width:1.6px;height:1.6px;background:#3a3a3a"></div>
<div class="a" style="left:18px;top:342.2px;width:5px;height:1px;background:#5e5e5e"></div>
<div class="a" style="left:19.7px;top:351.4px;width:1.6px;height:1.6px;background:#3a3a3a"></div>
<span class="t" style="left:10.5px;top:351.7px;width:20px;height:20px;line-height:20px;text-align:center;font-size:9.3px;color:#333;transform:rotate(-90deg)">1</span>
<div class="a" style="left:19.7px;top:370.4px;width:1.6px;height:1.6px;background:#3a3a3a"></div>
<div class="a" style="left:18px;top:380.2px;width:5px;height:1px;background:#5e5e5e"></div>
<div class="a" style="left:19.7px;top:389.5px;width:1.6px;height:1.6px;background:#3a3a3a"></div>
<span class="t" style="left:10.5px;top:389.8px;width:20px;height:20px;line-height:20px;text-align:center;font-size:9.3px;color:#333;transform:rotate(-90deg)">2</span>
<div class="a" style="left:19.7px;top:408.5px;width:1.6px;height:1.6px;background:#3a3a3a"></div>
<div class="a" style="left:18px;top:418.4px;width:5px;height:1px;background:#5e5e5e"></div>
<div class="a" style="left:19.7px;top:427.6px;width:1.6px;height:1.6px;background:#3a3a3a"></div>
<span class="t" style="left:10.5px;top:427.9px;width:20px;height:20px;line-height:20px;text-align:center;font-size:9.3px;color:#333;transform:rotate(-90deg)">3</span>
<div class="a" style="left:19.7px;top:446.6px;width:1.6px;height:1.6px;background:#3a3a3a"></div>
<div class="a" style="left:18px;top:456.5px;width:5px;height:1px;background:#5e5e5e"></div>
<div class="a" style="left:19.7px;top:465.7px;width:1.6px;height:1.6px;background:#3a3a3a"></div>
<span class="t" style="left:10.5px;top:466.0px;width:20px;height:20px;line-height:20px;text-align:center;font-size:9.3px;color:#333;transform:rotate(-90deg)">4</span>
<div class="a" style="left:19.7px;top:484.7px;width:1.6px;height:1.6px;background:#3a3a3a"></div>
<div class="a" style="left:18px;top:494.6px;width:5px;height:1px;background:#5e5e5e"></div>
<div class="a" style="left:19.7px;top:503.8px;width:1.6px;height:1.6px;background:#3a3a3a"></div>
<span class="t" style="left:10.5px;top:504.1px;width:20px;height:20px;line-height:20px;text-align:center;font-size:9.3px;color:#333;transform:rotate(-90deg)">5</span>
<div class="a" style="left:19.7px;top:522.8px;width:1.6px;height:1.6px;background:#3a3a3a"></div>
<div class="a" style="left:18px;top:532.7px;width:5px;height:1px;background:#5e5e5e"></div>
<div class="a" style="left:19.7px;top:541.9px;width:1.6px;height:1.6px;background:#3a3a3a"></div>
<span class="t" style="left:10.5px;top:542.2px;width:20px;height:20px;line-height:20px;text-align:center;font-size:9.3px;color:#333;transform:rotate(-90deg)">6</span>
<div class="a" style="left:19.7px;top:560.9px;width:1.6px;height:1.6px;background:#3a3a3a"></div>
<div class="a" style="left:18px;top:570.8px;width:5px;height:1px;background:#5e5e5e"></div>
<div class="a" style="left:19.7px;top:580.0px;width:1.6px;height:1.6px;background:#3a3a3a"></div>
<span class="t" style="left:10.5px;top:580.3px;width:20px;height:20px;line-height:20px;text-align:center;font-size:9.3px;color:#333;transform:rotate(-90deg)">7</span>
<div class="a" style="left:19.7px;top:599.0px;width:1.6px;height:1.6px;background:#3a3a3a"></div>
<div class="a" style="left:18px;top:608.9px;width:5px;height:1px;background:#5e5e5e"></div>
<div class="a" style="left:19.7px;top:618.1px;width:1.6px;height:1.6px;background:#3a3a3a"></div>
<span class="t" style="left:10.5px;top:618.4px;width:20px;height:20px;line-height:20px;text-align:center;font-size:9.3px;color:#333;transform:rotate(-90deg)">8</span>
<div class="a" style="left:19.7px;top:637.1px;width:1.6px;height:1.6px;background:#3a3a3a"></div>
<div class="a" style="left:18px;top:647.0px;width:5px;height:1px;background:#5e5e5e"></div>
<div class="a" style="left:19.7px;top:656.2px;width:1.6px;height:1.6px;background:#3a3a3a"></div>
<span class="t" style="left:10.5px;top:656.5px;width:20px;height:20px;line-height:20px;text-align:center;font-size:9.3px;color:#333;transform:rotate(-90deg)">9</span>
<div class="a" style="left:19.7px;top:675.2px;width:1.6px;height:1.6px;background:#3a3a3a"></div>
<div class="a" style="left:18px;top:685.0px;width:5px;height:1px;background:#5e5e5e"></div>
<div class="a" style="left:19.7px;top:694.3px;width:1.6px;height:1.6px;background:#3a3a3a"></div>
<span class="t" style="left:10.5px;top:694.6px;width:20px;height:20px;line-height:20px;text-align:center;font-size:9.3px;color:#333;transform:rotate(-90deg)">10</span>
<div class="a" style="left:19.7px;top:713.3px;width:1.6px;height:1.6px;background:#3a3a3a"></div>
<div class="a" style="left:18px;top:723.2px;width:5px;height:1px;background:#5e5e5e"></div>
<div class="a" style="left:19.7px;top:732.4px;width:1.6px;height:1.6px;background:#3a3a3a"></div>
<span class="t" style="left:10.5px;top:732.7px;width:20px;height:20px;line-height:20px;text-align:center;font-size:9.3px;color:#333;transform:rotate(-90deg)">11</span>
<div class="a" style="left:19.7px;top:751.4px;width:1.6px;height:1.6px;background:#3a3a3a"></div>
<!-- ===== page ===== -->
<div class="a" style="left:299.9px;top:228.6px;width:799px;height:545px;box-sizing:border-box;border:1px solid #c9c9c9;background:#fff"></div>
<svg style="left:320px;top:324px" width="17" height="15.2" viewBox="0 0 17 15.2">
 <g fill="none" stroke="#3c3c3c" stroke-width="1.25" stroke-linejoin="round" stroke-linecap="round">
  <path d="M8.5 1.4 L5.9 10.6 H2.4 C0.9 10.6 0.3 9.6 0.7 8.2 L2.3 2.6 C2.7 1.2 3.4 0.6 4.6 0.6 H9.6 C10.8 0.6 11.5 1.1 11.9 2.2 L12.6 4.1"/>
  <path d="M12.6 4.1 H14.4 C15.9 4.1 16.5 5.1 16.1 6.5 L14.5 12.1 C14.1 13.6 13.3 14.4 12 14.4 H7.2 C6 14.4 5.2 13.9 4.8 12.8 L4.2 10.8"/>
  <path d="M10.5 4.7 L8 13.5"/>
 </g>
</svg>
<!-- ===== status bar ===== -->
<div class="a" style="left:8px;top:759.4px;width:1368px;height:13px;background:#f3f3f3"></div>
<div class="a" style="left:1122.2px;top:759.4px;width:40.2px;height:13px;background:#d8d8d8"></div>
<svg style="left:231.6px;top:764px" width="14" height="9" viewBox="0 0 14 9"><path d="M0.6 9 V0.6 H6.4 V9 M7.4 9 V0.6 H13.2 V9 " fill="none" stroke="#333" stroke-width="1.1"/></svg>
<svg style="left:557.6px;top:762.6px" width="13" height="10" viewBox="0 0 13 10"><circle cx="6.5" cy="2.7" r="2.1" fill="none" stroke="#333" stroke-width="1"/><path d="M0.8 3.4 C0.4 2.4 1.6 1.8 2.2 2.6 L4 5 H9 L10.8 2.6 C11.4 1.8 12.6 2.4 12.2 3.4 L9.6 6.6 V10 M3.4 10 V6.6 L0.8 3.4" fill="none" stroke="#333" stroke-width="1"/></svg>
<svg style="left:1022px;top:763px" width="15" height="10" viewBox="0 0 15 10"><path d="M0.6 4 V0.6 H3.6 M11.4 0.6 H14.4 V4" fill="none" stroke="#333" stroke-width="1.1"/><path d="M3.8 10 V2.6 H8.8 L11.2 5 V10" fill="none" stroke="#333" stroke-width="1.1"/></svg>
<svg style="left:1095.2px;top:763.2px" width="13.4" height="9" viewBox="0 0 13.4 9"><path d="M0.6 9 V0.8 H5.2 C6 0.8 6.7 1.4 6.7 2.2 C6.7 1.4 7.4 0.8 8.2 0.8 H12.8 V9 M6.7 2.2 V9" fill="none" stroke="#333" stroke-width="1.1"/><path d="M2.2 3.6 H5 M2.2 5.8 H5 M2.2 8 H5 M8.4 3.6 H11.2 M8.4 5.8 H11.2 M8.4 8 H11.2" stroke="#333" stroke-width="0.9" fill="none"/></svg>
<svg style="left:1136.4px;top:763px" width="11" height="10" viewBox="0 0 11 10"><path d="M0.6 10 V0.6 H10.2 V10" fill="none" stroke="#222" stroke-width="1.2"/><path d="M2.4 3 H8.4 M2.4 5.2 H8.4 M2.4 7.4 H8.4 M2.4 9.4 H8.4" stroke="#222" stroke-width="1.1" fill="none"/></svg>
<svg style="left:1175.4px;top:763px" width="14" height="10" viewBox="0 0 14 10"><path d="M0.6 10 V0.6 H12.4 V5" fill="none" stroke="#333" stroke-width="1.2"/><path d="M2.4 3 H10.4 M2.4 5.2 H7 M2.4 7.4 H6" stroke="#333" stroke-width="1.1" fill="none"/><circle cx="10.4" cy="9.6" r="3.2" fill="#333"/></svg>
<div class="a" style="left:1208.8px;top:768.8px;width:7.6px;height:1.1px;background:#333"></div>
<div class="a" style="left:1222px;top:769.8px;width:100.6px;height:1px;background:#6a6a6a"></div>
<div class="a" style="left:1270.4px;top:765px;width:4.8px;height:8px;background:#5a5a5a"></div>
<div class="a" style="left:1327.8px;top:768.8px;width:7.2px;height:1.1px;background:#333"></div>
<div class="a" style="left:1330.9px;top:765.6px;width:1.1px;height:7px;background:#333"></div>
<!-- ===== texts ===== -->
<span class="t" id="t0" style="left:55.66px;top:23.14px;font-size:12px;color:#242424;letter-spacing:-0.080px;">Enregistrement automatique</span>
<span class="t" id="t1" style="left:400.38px;top:23.34px;font-size:12px;color:#242424;letter-spacing:0.177px;">Document5</span>
<span class="t" id="t2" style="left:469.75px;top:23.34px;font-size:12px;color:#242424;letter-spacing:0.263px;">-...</span>
<span class="t" id="t3" style="left:572.11px;top:23.09px;font-size:13.3px;color:#5a5a5a;letter-spacing:-0.311px;">Rechercher</span>
<span class="t" id="t4" style="left:19.81px;top:61.79px;font-size:13.3px;color:#242424;letter-spacing:-0.338px;">Fichier</span>
<span class="t" id="t5" style="left:76.26px;top:61.79px;font-size:13.3px;color:#242424;letter-spacing:-0.149px;">Accueil</span>
<span class="t" id="t6" style="left:137.91px;top:61.79px;font-size:13.3px;color:#242424;letter-spacing:-0.015px;">Insertion</span>
<span class="t" id="t7" style="left:209.13px;top:61.79px;font-size:13.3px;color:#242424;letter-spacing:-0.165px;">Dessin</span>
<span class="t" id="t8" style="left:268.91px;top:61.79px;font-size:13.3px;color:#242424;letter-spacing:-0.044px;">Conception</span>
<span class="t" id="t9" style="left:356.97px;top:61.79px;font-size:13.3px;color:#242424;letter-spacing:0.137px;">Mise en page</span>
<span class="t" id="t10" style="left:457.27px;top:61.79px;font-size:13.3px;color:#242424;letter-spacing:-0.399px;">Références</span>
<span class="t" id="t11" style="left:543.08px;top:61.79px;font-size:13.3px;color:#242424;letter-spacing:0.085px;">Publipostage</span>
<span class="t" id="t12" style="left:641.50px;top:61.79px;font-size:13.3px;color:#242424;letter-spacing:-0.235px;">Révision</span>
<span class="t" id="t13" style="left:711.90px;top:61.79px;font-size:13.3px;color:#242424;letter-spacing:-0.093px;">Affichage</span>
<span class="t" id="t14" style="left:786.37px;top:61.79px;font-size:13.3px;color:#242424;letter-spacing:-0.056px;">Aide</span>
<span class="t" id="t15" style="left:833.98px;top:61.79px;font-size:13.3px;color:#242424;letter-spacing:0.200px;">Acrobat</span>
<span class="t" id="t16" style="left:1058.75px;top:61.79px;font-size:13.3px;color:#242424;letter-spacing:-0.188px;">Commentaires</span>
<span class="t" id="t17" style="left:1184.08px;top:61.79px;font-size:13.3px;color:#242424;letter-spacing:0.262px;">Modification</span>
<span class="t" id="t18" style="left:1303.58px;top:61.79px;font-size:13.3px;color:#ffffff;letter-spacing:-0.010px;">Partager</span>
<span class="t" id="t19" style="left:22.08px;top:166.85px;font-size:11.7px;color:#242424;letter-spacing:-0.259px;">Presse-papiers</span>
<span class="t" id="t20" style="left:212.08px;top:166.85px;font-size:11.7px;color:#242424;letter-spacing:-0.320px;">Police</span>
<span class="t" id="t21" style="left:413.08px;top:166.85px;font-size:11.7px;color:#242424;letter-spacing:-0.094px;">Paragraphe</span>
<span class="t" id="t22" style="left:713.03px;top:166.85px;font-size:11.7px;color:#242424;letter-spacing:-0.517px;">Styles</span>
<span class="t" id="t23" style="left:980.98px;top:166.85px;font-size:11.7px;color:#242424;letter-spacing:-0.020px;">Adobe Acrobat</span>
<span class="t" id="t24" style="left:1080.95px;top:166.85px;font-size:11.7px;color:#242424;letter-spacing:-0.250px;">Voix</span>
<span class="t" id="t25" style="left:1133.19px;top:166.85px;font-size:11.7px;color:#242424;letter-spacing:-0.039px;">Compléments</span>
<span class="t" id="t26" style="left:39.44px;top:128.04px;font-size:12px;color:#242424;letter-spacing:0.184px;">Coller</span>
<span class="t" id="t27" style="left:128.54px;top:93.29px;font-size:12px;color:#242424;letter-spacing:-0.006px;">Calibri (Corps)</span>
<span class="t" id="t28" style="left:287.80px;top:93.30px;font-size:12.4px;color:#242424;letter-spacing:-0.930px;">11</span>
<span class="t" id="t29" style="left:590.13px;top:115.09px;font-size:13.3px;color:#242424;letter-spacing:0.794px;">Normal</span>
<span class="t" id="t30" style="left:676.02px;top:115.09px;font-size:13.3px;color:#242424;letter-spacing:0.385px;">Sans interligne</span>
<span class="t" id="t31" style="left:797.14px;top:114.83px;font-size:25.6px;color:#4f70ad;letter-spacing:-0.204px;">Titre 1</span>
<span class="t" id="t32" style="left:930.07px;top:125.54px;font-size:12px;color:#242424;letter-spacing:0.094px;">Édition</span>
<span class="t" id="t33" style="left:1006.04px;top:127.54px;font-size:12px;color:#242424;letter-spacing:-0.550px;">Crea</span>
<span class="t" id="t34" style="left:999.07px;top:143.04px;font-size:12px;color:#242424;letter-spacing:-0.484px;">un PDF</span>
<span class="t" id="t35" style="left:1075.63px;top:128.04px;font-size:12px;color:#242424;letter-spacing:-0.101px;">Dicter</span>
<span class="t" id="t36" style="left:1130.07px;top:127.04px;font-size:12px;color:#242424;letter-spacing:0.223px;">Compléments</span>
<span class="t" id="t37" style="left:1227.15px;top:127.04px;font-size:12px;color:#242424;letter-spacing:-0.192px;">Rédacteur</span>
<span class="t" id="t38" style="left:1287.57px;top:127.04px;font-size:12px;color:#242424;letter-spacing:0.334px;">Copilot</span>
<span class="t" id="t39" style="left:376.53px;top:327.71px;font-size:18px;color:#686868;letter-spacing:0.423px;">Sélectionnez</span>
<span class="t" id="t40" style="left:487.37px;top:327.71px;font-size:18px;color:#686868;letter-spacing:0.705px;">l’icône</span>
<span class="t" id="t41" style="left:546.63px;top:327.71px;font-size:18px;color:#686868;letter-spacing:1.350px;">ou</span>
<span class="t" id="t42" style="left:571.70px;top:327.71px;font-size:18px;color:#686868;letter-spacing:0.691px;">appuyez</span>
<span class="t" id="t43" style="left:646.20px;top:327.71px;font-size:18px;color:#686868;letter-spacing:0.147px;">sur</span>
<span class="t" id="t44" style="left:677.14px;top:327.71px;font-size:18px;color:#686868;letter-spacing:1.350px;">Alt</span>
<span class="t" id="t45" style="left:707.24px;top:327.71px;font-size:18px;color:#686868;">+</span>
<span class="t" id="t46" style="left:723.52px;top:327.71px;font-size:18px;color:#686868;">i</span>
<span class="t" id="t47" style="left:734.46px;top:327.71px;font-size:18px;color:#686868;letter-spacing:1.350px;">pour</span>
<span class="t" id="t48" style="left:778.68px;top:327.71px;font-size:18px;color:#686868;letter-spacing:0.692px;">faire</span>
<span class="t" id="t49" style="left:819.63px;top:327.71px;font-size:18px;color:#686868;letter-spacing:1.350px;">un</span>
<span class="t" id="t50" style="left:845.92px;top:327.71px;font-size:18px;color:#686868;letter-spacing:1.264px;">brouillon</span>
<span class="t" id="t51" style="left:926.47px;top:327.71px;font-size:18px;color:#686868;letter-spacing:-0.057px;">avec</span>
<span class="t" id="t52" style="left:376.42px;top:355.21px;font-size:18px;color:#686868;letter-spacing:1.038px;">Copilot</span>
<span class="t" id="t53" style="left:18.49px;top:761.54px;font-size:12px;color:#242424;letter-spacing:-0.435px;">Page 1 sur 1</span>
<span class="t" id="t54" style="left:101.89px;top:761.54px;font-size:12px;color:#242424;letter-spacing:-0.330px;">0 mots</span>
<span class="t" id="t55" style="left:152.01px;top:761.54px;font-size:12px;color:#242424;letter-spacing:-0.472px;">0 caractères</span>
<span class="t" id="t56" style="left:263.54px;top:761.54px;font-size:12px;color:#242424;letter-spacing:-0.589px;">Français (France)</span>
<span class="t" id="t57" style="left:367.49px;top:761.54px;font-size:12px;color:#242424;letter-spacing:-0.286px;">Saisie semi-automatique : activée</span>
<span class="t" id="t58" style="left:574.94px;top:761.54px;font-size:12px;color:#242424;letter-spacing:-0.168px;">Accessibilité : vérification terminée</span>
<span class="t" id="t59" style="left:1039.08px;top:762.14px;font-size:12px;color:#242424;letter-spacing:-0.732px;">Focus</span>
<span class="t" id="t60" style="left:1349.28px;top:761.94px;font-size:12px;color:#242424;letter-spacing:0.146px;">100%</span>
<span class="t" id="t61" style="left:133.61px;top:118.90px;font-size:12.4px;color:#242424;font-weight:bold">G</span>
<span class="t" id="t62" style="left:161.60px;top:118.27px;font-size:14.6px;color:#242424;font-family:'Liberation Serif',serif;font-style:italic">I</span>
<span class="t" id="t63" style="left:186.16px;top:119.18px;font-size:11.6px;color:#242424;">S</span>
<span class="t" id="t64" style="left:226.04px;top:119.34px;font-size:12px;color:#444444;letter-spacing:-0.900px;">ab</span>
<span class="t" id="t65" style="left:255.00px;top:118.83px;font-size:12.6px;color:#242424;font-weight:bold">x</span>
<span class="t" id="t66" style="left:262.50px;top:125.07px;font-size:7px;color:#2b7cd3;font-weight:bold">2</span>
<span class="t" id="t67" style="left:280.96px;top:118.83px;font-size:12.6px;color:#242424;font-weight:bold">x</span>
<span class="t" id="t68" style="left:287.54px;top:114.47px;font-size:7px;color:#2b7cd3;font-weight:bold">2</span>
<span class="t" id="t69" style="left:305.08px;top:118.72px;font-size:16.4px;color:#444444;">A</span>
<span class="t" id="t70" style="left:217.38px;top:143.16px;font-size:15.4px;color:#444444;">A</span>
<span class="t" id="t71" style="left:256.45px;top:146.54px;font-size:12px;color:#444444;letter-spacing:0.900px;">Aa</span>
<span class="t" id="t72" style="left:300.84px;top:144.81px;font-size:17px;color:#444444;">A</span>
<span class="t" id="t73" style="left:329.30px;top:146.33px;font-size:12.6px;color:#444444;">A</span>
<span class="t" id="t74" style="left:484.58px;top:143.56px;font-size:16px;color:#333;font-weight:bold">¶</span>
</body>
</html>
